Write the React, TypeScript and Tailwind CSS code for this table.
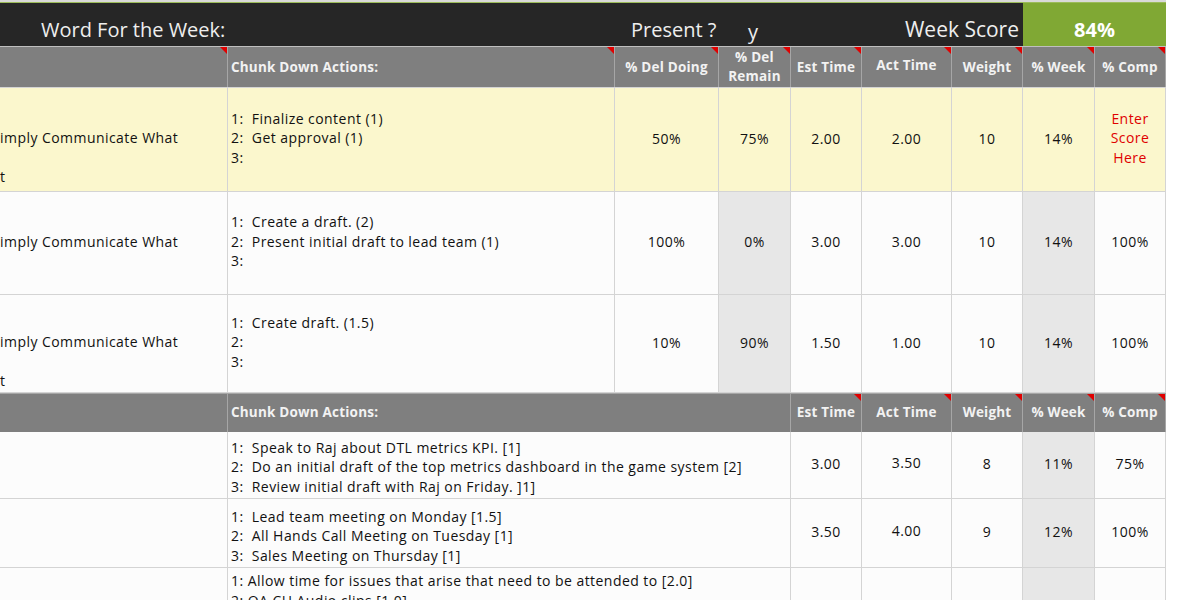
import React from 'react';

// column widths, measured from the sheet
const W = [228, 387, 104, 72, 71, 90, 71, 72, 71];
const FONT = "font-['Open_Sans','Noto_Sans',sans-serif]";

type Align = 'center' | 'end' | 'start';

function Flag() {
  return (
    <span className="absolute top-0 right-0 w-0 h-0 border-t-[7px] border-l-[7px] border-t-[#e00000] border-l-transparent" />
  );
}

function HeadCell({ w, children, left, flag = true }: { w: number; children?: React.ReactNode; left?: boolean; flag?: boolean }) {
  return (
    <div
      style={{ width: w }}
      className={`relative shrink-0 h-full flex items-center border-r border-[#a6a6a6] ${left ? 'justify-start pl-[3px]' : 'justify-center text-center'}`}
    >
      {children}
      {flag && <Flag />}
    </div>
  );
}

function Cell({ w, bg, align = 'center', left, children, red }: { w: number; bg: string; align?: Align; left?: boolean; children?: React.ReactNode; red?: boolean }) {
  const al = align === 'center' ? 'items-center pb-[3px]' : align === 'end' ? 'items-end pb-[2px]' : 'items-start pt-[3px]';
  return (
    <div
      style={{ width: w }}
      className={`shrink-0 h-full flex ${al} ${left ? 'justify-start' : 'justify-center text-center'} border-r border-[#d4d4d4] ${bg} ${red ? 'text-[#e00000]' : 'text-[#111]'} overflow-hidden`}
    >
      {children}
    </div>
  );
}

function Lines({ items }: { items: string[] }) {
  return (
    <div className="leading-[19.5px] whitespace-pre">
      {items.map((t, i) => (
        <div key={i}>{t || '\u00a0'}</div>
      ))}
    </div>
  );
}

const topRows = [
  {
    h: 'h-[104px]',
    yellow: true,
    a: ['', '', 'imply Communicate What', '', 't'],
    b: ['1:  Finalize content (1)', '2:  Get approval (1)', '3:'],
    vals: ['50%', '75%', '2.00', '2.00', '10', '14%'],
    comp: null as string | null,
  },
  {
    h: 'h-[103px]',
    yellow: false,
    a: ['imply Communicate What'],
    b: ['1:  Create a draft. (2)', '2:  Present initial draft to lead team (1)', '3:'],
    vals: ['100%', '0%', '3.00', '3.00', '10', '14%'],
    comp: '100%',
  },
  {
    h: 'h-[98px]',
    yellow: false,
    a: ['', '', 'imply Communicate What', '', 't'],
    b: ['1:  Create draft. (1.5)', '2:', '3:'],
    vals: ['10%', '90%', '1.50', '1.00', '10', '14%'],
    comp: '100%',
  },
];

const bottomRows = [
  {
    h: 'h-[67px]',
    align: 'end' as Align,
    b: [
      '1:  Speak to Raj about DTL metrics KPI. [1]',
      '2:  Do an initial draft of the top metrics dashboard in the game system [2]',
      '3:  Review initial draft with Raj on Friday. ]1]',
    ],
    vals: ['3.00', '3.50', '8', '11%', '75%'],
  },
  {
    h: 'h-[69px]',
    align: 'end' as Align,
    b: ['1:  Lead team meeting on Monday [1.5]', '2:  All Hands Call Meeting on Tuesday [1]', '3:  Sales Meeting on Thursday [1]'],
    vals: ['3.50', '4.00', '9', '12%', '100%'],
  },
  {
    h: 'h-[60px]',
    align: 'start' as Align,
    b: ['1: Allow time for issues that arise that need to be attended to [2.0]', '2: QA CH Audio clips [1.0]', ''],
    vals: ['', '', '', '', ''],
  },
];

export default function App() {
  const wide = W[1] + W[2] + W[3];

  return (
    <div className={`w-[1200px] h-[600px] overflow-hidden bg-white ${FONT} text-[14px] tracking-[0.45px]`}>
      <div className="w-[1166px]">
        {/* top strip */}
        <div className="h-[2px] bg-[#d9d9d9]" />
        <div className="h-[1px] bg-[#9bbb59]" />

        {/* title bar */}
        <div className="h-[43px] flex bg-[#262626] text-[#eeeeee] text-[20px] leading-none tracking-normal">
          <div className="w-[615px] flex items-end pb-[6px] pl-[41px]">Word For the Week:</div>
          <div className="w-[104px] flex items-end pb-[6px] pl-[16px]">Present ?</div>
          <div className="w-[72px] flex items-end pb-[4px] pl-[29px]">y</div>
          <div className="w-[232px] flex items-end justify-end pb-[6px] pr-[4px] text-[21px]">Week Score</div>
          <div className="w-[143px] flex items-end justify-center pb-[6px] bg-[#80a834] text-white font-bold">84%</div>
        </div>
        <div className="h-[1px] bg-[#bfbfbf]" />

        {/* header 1 */}
        <div className="h-[40px] flex bg-[#7f7f7f] text-[#f2f2f2] font-bold text-[13.5px] tracking-[0.2px] leading-[19px]">
          <HeadCell w={W[0]} />
          <HeadCell w={W[1]} left>Chunk Down Actions:</HeadCell>
          <HeadCell w={W[2]}>% Del Doing</HeadCell>
          <HeadCell w={W[3]}><span>% Del<br />Remain</span></HeadCell>
          <HeadCell w={W[4]}>Est Time</HeadCell>
          <HeadCell w={W[5]}><span className="-mt-[3px]">Act Time</span></HeadCell>
          <HeadCell w={W[6]}>Weight</HeadCell>
          <HeadCell w={W[7]}>% Week</HeadCell>
          <HeadCell w={W[8]}>% Comp</HeadCell>
        </div>
        <div className="h-[1px] bg-[#d4d4d4]" />

        {topRows.map((r, i) => {
          const base = r.yellow ? 'bg-[#fbf7cd]' : 'bg-[#fcfcfc]';
          const shade = r.yellow ? 'bg-[#fbf7cd]' : 'bg-[#e7e7e7]';
          return (
            <div key={i} className={`${r.h} flex border-b border-[#d4d4d4]`}>
              <Cell w={W[0]} bg={base} left><Lines items={r.a} /></Cell>
              <Cell w={W[1]} bg={base} left><div className="pl-[3px]"><Lines items={r.b} /></div></Cell>
              <Cell w={W[2]} bg={base}>{r.vals[0]}</Cell>
              <Cell w={W[3]} bg={shade}>{r.vals[1]}</Cell>
              <Cell w={W[4]} bg={base}>{r.vals[2]}</Cell>
              <Cell w={W[5]} bg={base}>{r.vals[3]}</Cell>
              <Cell w={W[6]} bg={base}>{r.vals[4]}</Cell>
              <Cell w={W[7]} bg={shade}>{r.vals[5]}</Cell>
              {r.comp ? (
                <Cell w={W[8]} bg={base}>{r.comp}</Cell>
              ) : (
                <Cell w={W[8]} bg={base} red><Lines items={['Enter', 'Score', 'Here']} /></Cell>
              )}
            </div>
          );
        })}

        {/* header 2 */}
        <div className="h-[39px] flex bg-[#7f7f7f] text-[#f2f2f2] font-bold text-[13.5px] tracking-[0.2px] border-t border-[#a6a6a6]">
          <HeadCell w={W[0]} flag={false} />
          <HeadCell w={wide} left flag={false}><span className="-mt-[2px]">Chunk Down Actions:</span></HeadCell>
          <HeadCell w={W[4]}><span className="-mt-[2px]">Est Time</span></HeadCell>
          <HeadCell w={W[5]}><span className="-mt-[2px]">Act Time</span></HeadCell>
          <HeadCell w={W[6]}><span className="-mt-[2px]">Weight</span></HeadCell>
          <HeadCell w={W[7]}><span className="-mt-[2px]">% Week</span></HeadCell>
          <HeadCell w={W[8]}><span className="-mt-[2px]">% Comp</span></HeadCell>
        </div>

        {bottomRows.map((r, i) => (
          <div key={i} className={`${r.h} flex border-b border-[#d4d4d4]`}>
            <Cell w={W[0]} bg="bg-[#fcfcfc]" />
            <Cell w={wide} bg="bg-[#fcfcfc]" left align={r.align}>
              <div className="pl-[3px]"><Lines items={r.b} /></div>
            </Cell>
            <Cell w={W[4]} bg="bg-[#fcfcfc]">{r.vals[0]}</Cell>
            <Cell w={W[5]} bg="bg-[#fcfcfc]"><span className="-mt-[2px]">{r.vals[1]}</span></Cell>
            <Cell w={W[6]} bg="bg-[#fcfcfc]">{r.vals[2]}</Cell>
            <Cell w={W[7]} bg="bg-[#e7e7e7]">{r.vals[3]}</Cell>
            <Cell w={W[8]} bg="bg-[#fcfcfc]">{r.vals[4]}</Cell>
          </div>
        ))}
      </div>
    </div>
  );
}
